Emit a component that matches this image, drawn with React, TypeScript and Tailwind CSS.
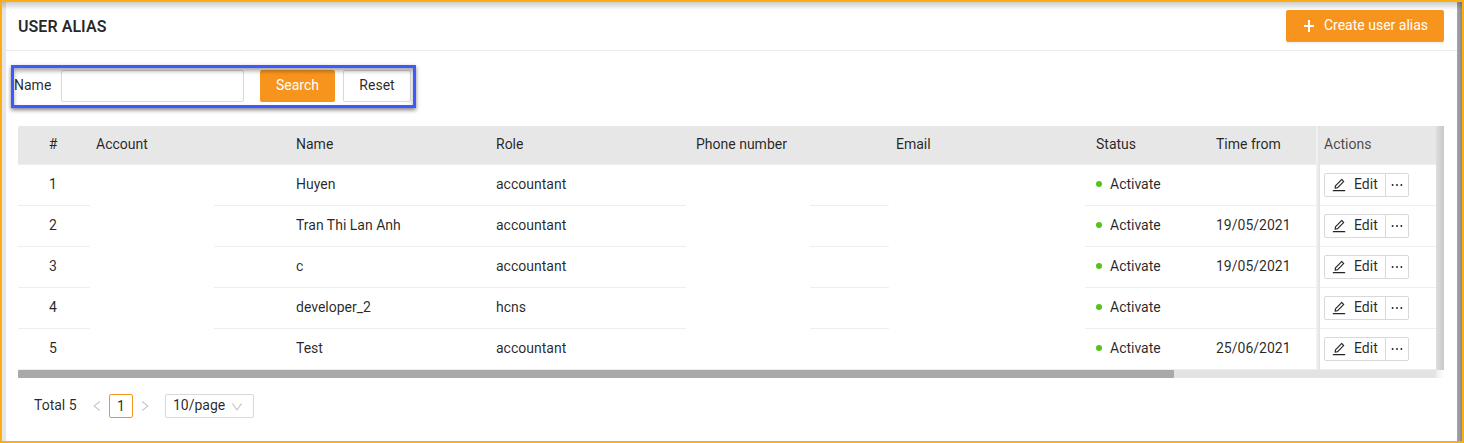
const rows = [
  { id: 1, name: "Huyen", role: "accountant", from: "" },
  { id: 2, name: "Tran Thi Lan Anh", role: "accountant", from: "19/05/2021" },
  { id: 3, name: "c", role: "accountant", from: "19/05/2021" },
  { id: 4, name: "developer_2", role: "hcns", from: "" },
  { id: 5, name: "Test", role: "accountant", from: "25/06/2021" },
];

const columns = "grid grid-cols-[70px_200px_200px_200px_200px_200px_120px_108px] items-center";

const EditIcon = () => (
  <svg className="size-[14px]" viewBox="64 64 896 896" fill="currentColor">
    <path d="M257.7 752c2 0 4-.2 6-.5L431.9 722c2-.4 3.9-1.3 5.3-2.8l423.9-423.9a9.96 9.96 0 000-14.1L694.9 114.9c-1.9-1.9-4.4-2.9-7.1-2.9s-5.2 1-7.1 2.9L256.8 538.8c-1.5 1.5-2.4 3.3-2.8 5.3l-29.5 168.2a33.5 33.5 0 009.4 29.8c6.6 6.4 14.9 9.9 23.8 9.9zm67.4-174.4L687.8 215l73.3 73.3-362.7 362.6-88.9 15.7 15.6-89zM880 836H144c-17.7 0-32 14.3-32 32v36c0 4.4 3.6 8 8 8h784c4.4 0 8-3.6 8-8v-36c0-17.7-14.3-32-32-32z" />
  </svg>
);

const LeftIcon = ({ className }: { className: string }) => (
  <svg className={className} viewBox="64 64 896 896" fill="currentColor">
    <path d="M724 218.3V141c0-6.7-7.7-10.4-12.9-6.3L260.3 486.8a31.86 31.86 0 000 50.3l450.8 352.1c5.3 4.1 12.9.4 12.9-6.3v-77.3c0-4.9-2.3-9.6-6.1-12.6l-360-281 360-281.1c3.8-3 6.1-7.7 6.1-12.6z" />
  </svg>
);

const DownIcon = () => (
  <svg className="size-3" viewBox="64 64 896 896" fill="currentColor">
    <path d="M884 256h-75c-5.1 0-9.9 2.5-12.9 6.6L512 654.2 227.9 262.6c-3-4.1-7.8-6.6-12.9-6.6h-75c-6.5 0-10.3 7.4-6.5 12.7l352.6 486.1c12.8 17.6 39 17.6 51.7 0l352.6-486.1c3.9-5.3.1-12.7-6.4-12.7z" />
  </svg>
);

const MoreIcon = () => (
  <svg className="size-[14px]" viewBox="64 64 896 896" fill="currentColor">
    <circle cx="232" cy="511" r="62" />
    <circle cx="512" cy="511" r="62" />
    <circle cx="792" cy="511" r="62" />
  </svg>
);

const PlusIcon = () => (
  <svg className="size-[14px]" viewBox="0 0 14 14" fill="currentColor" shapeRendering="crispEdges">
    <path d="M6 2h2v5h4v2H8v5H6V9H2V7h4z" />
  </svg>
);

function RowLine({ full }: { full: boolean }) {
  if (full) return <div className="h-px w-[1298px] bg-[#eeeeee]" />;
  return (
    <div className="flex h-px w-[1298px]">
      <div className="mr-[124px] w-[72px] bg-[#eeeeee]" />
      <div className="mr-[124px] w-[472px] bg-[#eeeeee]" />
      <div className="mr-[196px] w-[79px] bg-[#eeeeee]" />
      <div className="w-[231px] bg-[#eeeeee]" />
    </div>
  );
}

function Table() {
  return (
    <div className="ml-3 flex w-[1426px]">
      <div className="w-[1298px] shrink-0">
        <div className={`${columns} h-[39px] rounded-tl-[2px] border-b border-[#eeeeee] bg-[#e7e7e7] pb-[2px]`}>
          <span className="text-center">#</span>
          <span className="pl-2">Account</span>
          <span className="pl-2">Name</span>
          <span className="pl-2">Role</span>
          <span className="pl-2">Phone number</span>
          <span className="pl-2">Email</span>
          <span className="pl-2">Status</span>
          <span className="pl-2">Time from</span>
        </div>
        {rows.map((r, i) => (
          <div key={r.id}>
            <div className={`${columns} h-10 pb-[2px]`}>
              <span className="text-center">{r.id}</span>
              <span />
              <span className="pl-2">{r.name}</span>
              <span className="pl-2">{r.role}</span>
              <span />
              <span />
              <span className="flex items-center gap-2 pl-2">
                <i className="size-1.5 rounded-full bg-[#52c41a]" />
                Activate
              </span>
              <span className="pl-2">{r.from}</span>
            </div>
            <RowLine full={i === rows.length - 1} />
          </div>
        ))}
      </div>
      <div className="w-1 shrink-0 bg-linear-to-r from-black/4 to-black/12" />
      <div className="w-[116px] shrink-0">
        <div className="flex h-[39px] items-center border-b border-[#eeeeee] bg-[#e7e7e7] pb-[2px] pl-1 text-black/70">Actions</div>
        {rows.map((r) => (
          <div key={r.id} className="flex h-[41px] border-b border-[#eeeeee] pt-2 pl-1">
            <button className="flex h-6 w-[62px] items-center gap-2 rounded-l-[2px] border border-[#d9d9d9] pb-[2px] pl-[7px]">
              <span className="pt-[2px]"><EditIcon /></span>Edit
            </button>
            <button className="-ml-px flex h-6 w-6 items-center justify-center rounded-r-[2px] border border-[#d9d9d9]">
              <MoreIcon />
            </button>
          </div>
        ))}
      </div>
      <div className="w-2 shrink-0 bg-linear-to-r from-[#dedede] to-[#c8c8c8]" />
    </div>
  );
}

export default function App() {
  return (
    <div className="relative flex h-[443px] w-[1464px] flex-col overflow-hidden border-2 border-[#faad14] bg-white pl-1 font-['Roboto',sans-serif] text-[14px] leading-[22px] text-black/85">
      <header className="flex h-[49px] w-[1451px] shrink-0 items-center justify-between border-b border-[#ebebeb] pr-[13px] pl-3">
        <h1 className="pt-px text-[16px] font-semibold tracking-[0.05px]">USER ALIAS</h1>
        <button className="flex h-8 w-[158px] items-center justify-center gap-2 rounded-[2px] bg-[#f7941d] pb-[2px] text-white shadow-[0_2px_0_rgba(0,0,0,0.045)]">
          <PlusIcon />Create user alias
        </button>
      </header>

      <form className="mt-[14px] ml-[5px] flex h-[43px] w-[405px] shrink-0 items-center border-[3px] border-[#3d5afe] pb-[2px] shadow-[0_2px_4px_rgba(0,0,0,0.5)]">
        <label className="w-[47px] pb-px">Name</label>
        <input className="h-8 w-[183px] rounded-[2px] border border-[#d9d9d9]" />
        <button type="button" className="ml-4 h-8 w-[75px] rounded-[2px] bg-[#f7941d] pb-px text-white">Search</button>
        <button type="button" className="ml-2 h-8 w-[68px] rounded-[2px] border border-[#d9d9d9] pb-px">Reset</button>
        <div className="pointer-events-none absolute top-[66px] left-[12px] h-[37px] w-[399px] shadow-[inset_0_3px_4px_rgba(0,0,0,0.35)]" />
      </form>

      <div className="h-[18px] shrink-0" />
      <Table />
      <div className="ml-3 flex h-2 w-[1426px] shrink-0 bg-[#e3e3e3]">
        <div className="w-[1156px] rounded-[1px] bg-[#a9a9a9]" />
        <div className="ml-auto w-2 bg-linear-to-r from-[#ededed] to-white" />
      </div>

      <footer className="mt-4 ml-7 flex h-6 shrink-0 items-center">
        <span className="w-[57px] pb-[2px]">Total 5</span>
        <LeftIcon className="size-3 text-black/25" />
        <span className="ml-[6px] flex h-6 w-6 items-center justify-center rounded-[2px] border border-[#f7941d]">1</span>
        <LeftIcon className="ml-[6px] size-3 rotate-180 text-black/25" />
        <span className="ml-[14px] flex h-6 w-[89px] items-center gap-[6px] rounded-[2px] border border-[#d9d9d9] pb-[2px] pl-[7px]">
          10/page<span className="pt-[3px] text-black/25"><DownIcon /></span>
        </span>
      </footer>

      <div className="pointer-events-none absolute inset-y-0 left-0 w-1 bg-[#e6e6e6]" />
      <div className="pointer-events-none absolute inset-y-0 right-0 w-[5px] bg-linear-to-r from-[#a6a8ac] to-[#85888d]" />
      <div className="pointer-events-none absolute inset-x-0 top-0 h-2 bg-linear-to-b from-black/20 to-transparent" />
    </div>
  );
}
